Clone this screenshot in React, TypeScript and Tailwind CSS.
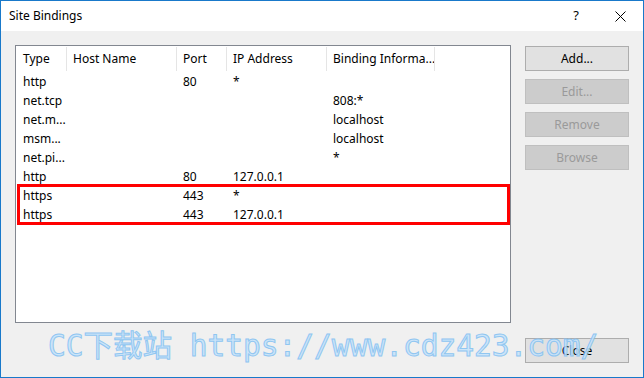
import React from "react";

const cols = [
  { label: "Type", w: "w-[51px]", pl: "pl-[7px]" },
  { label: "Host Name", w: "w-[110px]", pl: "pl-[6px]" },
  { label: "Port", w: "w-[50px]", pl: "pl-[6px]" },
  { label: "IP Address", w: "w-[100px]", pl: "pl-[6px]" },
  { label: "Binding Informa...", w: "w-[108px]", pl: "pl-[6px]" },
];

const rows: string[][] = [
  ["http", "", "80", "*", ""],
  ["net.tcp", "", "", "", "808:*"],
  ["net.m...", "", "", "", "localhost"],
  ["msm...", "", "", "", "localhost"],
  ["net.pi...", "", "", "", "*"],
  ["http", "", "80", "127.0.0.1", ""],
  ["https", "", "443", "*", ""],
  ["https", "", "443", "127.0.0.1", ""],
];

function Btn({ label, disabled }: { label: string; disabled?: boolean }) {
  return (
    <div
      className={
        disabled
          ? "h-[25px] w-[104px] flex items-center justify-center border border-[#bfbfbf] bg-[#cccccc] text-[#9a9a9a]"
          : "h-[25px] w-[104px] flex items-center justify-center border border-[#adadad] bg-[#e1e1e1] text-black"
      }
    >
      {label}
    </div>
  );
}

export default function App() {
  return (
    <div className="relative w-[644px] h-[378px] border border-[#1979ca] bg-[#f0f0f0] flex flex-col font-['Segoe_UI','Noto_Sans',sans-serif] text-[12px] text-black overflow-hidden">
      {/* title bar */}
      <div className="h-[30px] bg-white flex items-center pl-[8px] shrink-0">
        <span className="flex-1">Site Bindings</span>
        <span className="w-[14px] text-center mr-[32px] text-[13px]">?</span>
        <svg width="11" height="11" viewBox="0 0 11 11" className="mr-[17px]">
          <path d="M0.5 0.5 L10.5 10.5 M10.5 0.5 L0.5 10.5" stroke="#000" strokeWidth="1" />
        </svg>
      </div>
      {/* body */}
      <div className="flex-1 flex flex-col px-[14px] pt-[14px] pb-[14px]">
        <div className="flex gap-[14px]">
          <div className="relative w-[496px] h-[278px] border border-[#828790] bg-white">
            <div className="flex h-[26px]">
              {cols.map((c, i) => (
                <div key={i} className={`${c.w} ${c.pl} relative flex items-center`}>
                  <span className="whitespace-nowrap">{c.label}</span>
                  <div className="absolute right-0 top-[1px] bottom-[1px] w-px bg-[#e5e5e5]" />
                </div>
              ))}
            </div>
            {rows.map((r, ri) => (
              <div key={ri} className="flex h-[19px]">
                {r.map((cell, ci) => (
                  <div key={ci} className={`${cols[ci].w} ${cols[ci].pl} flex items-center whitespace-nowrap`}>
                    {cell}
                  </div>
                ))}
              </div>
            ))}
            <div className="absolute left-[1px] top-[138px] w-[493px] h-[41px] border-[3px] border-[#ff0000]" />
          </div>
          <div className="flex flex-col gap-[8px] pt-[1px]">
            <Btn label="Add..." />
            <Btn label="Edit..." disabled />
            <Btn label="Remove" disabled />
            <Btn label="Browse" disabled />
          </div>
        </div>
        <div className="flex justify-end mt-[15px]">
          <Btn label="Close" />
        </div>
      </div>
      {/* watermark */}
      <div className="pointer-events-none absolute left-[47px] top-[327px] whitespace-nowrap font-['DejaVu_Sans_Mono','Noto_Sans_CJK_SC',monospace] text-[29.5px] leading-[36px] text-[#c9e4fa] opacity-90 [-webkit-text-stroke:1px_#86c2f2]">
        CC下载站 https://www.cdz423.com/
      </div>
    </div>
  );
}
